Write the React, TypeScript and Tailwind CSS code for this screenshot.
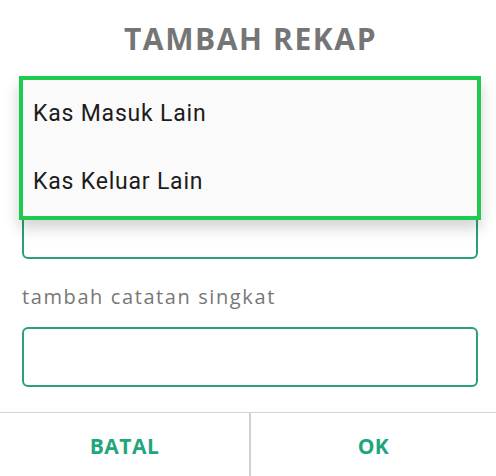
import React from 'react'

const MENU = ['Kas Masuk Lain', 'Kas Keluar Lain']

function Field({ label, children }: { label?: string; children?: React.ReactNode }) {
  return (
    <div>
      {label ? (
        <p className="h-[68px] pt-[25px] text-[20px] leading-[26px] text-[#777777] tracking-[1.6px] [font-family:'Open_Sans',sans-serif]">
          {label}
        </p>
      ) : null}
      <div className="h-[60px] rounded-[6px] border-2 border-[#2a9f80] bg-white">{children}</div>
    </div>
  )
}

export default function App() {
  return (
    <div className="relative w-[496px] h-[476px] bg-white overflow-hidden">
      {/* dialog body */}
      <div className="h-[76px] flex items-center justify-center pl-[5px]">
        <h1 className="text-[30px] font-bold text-[#757575] tracking-[1.6px] [font-family:'Open_Sans',sans-serif]">
          TAMBAH REKAP
        </h1>
      </div>

      <div className="pl-[22px] pr-[18px]">
        <div className="h-[123px]" />
        <Field />
        <Field label="tambah catatan singkat" />
        <div className="h-[25px]" />
      </div>

      <div className="border-t border-[#d4d4d4] grid grid-cols-[251px_1fr] h-[64px]">
        <button className="border-r-2 border-[#d0d0d0] flex items-center justify-center pt-[4px] text-[21px] font-bold tracking-[0.5px] text-[#1fa67c] [font-family:'Open_Sans',sans-serif]">
          BATAL
        </button>
        <button className="flex items-center justify-center pt-[4px] text-[21px] font-bold tracking-[0.5px] text-[#1fa67c] [font-family:'Open_Sans',sans-serif]">
          OK
        </button>
      </div>

      {/* open dropdown menu */}
      <div className="absolute left-[19px] top-[76px] w-[462px] h-[144px] border-[4px] border-[#1ecb4e] bg-[#fafafa] shadow-[0_8px_14px_rgba(0,0,0,0.18)]">
        {MENU.map(m => (
          <div key={m} className="h-[68px] flex items-center pl-[10px] text-[23px] tracking-[0.8px] text-[#1c1c1c] [font-family:Roboto,sans-serif]">
            {m}
          </div>
        ))}
      </div>
    </div>
  )
}
